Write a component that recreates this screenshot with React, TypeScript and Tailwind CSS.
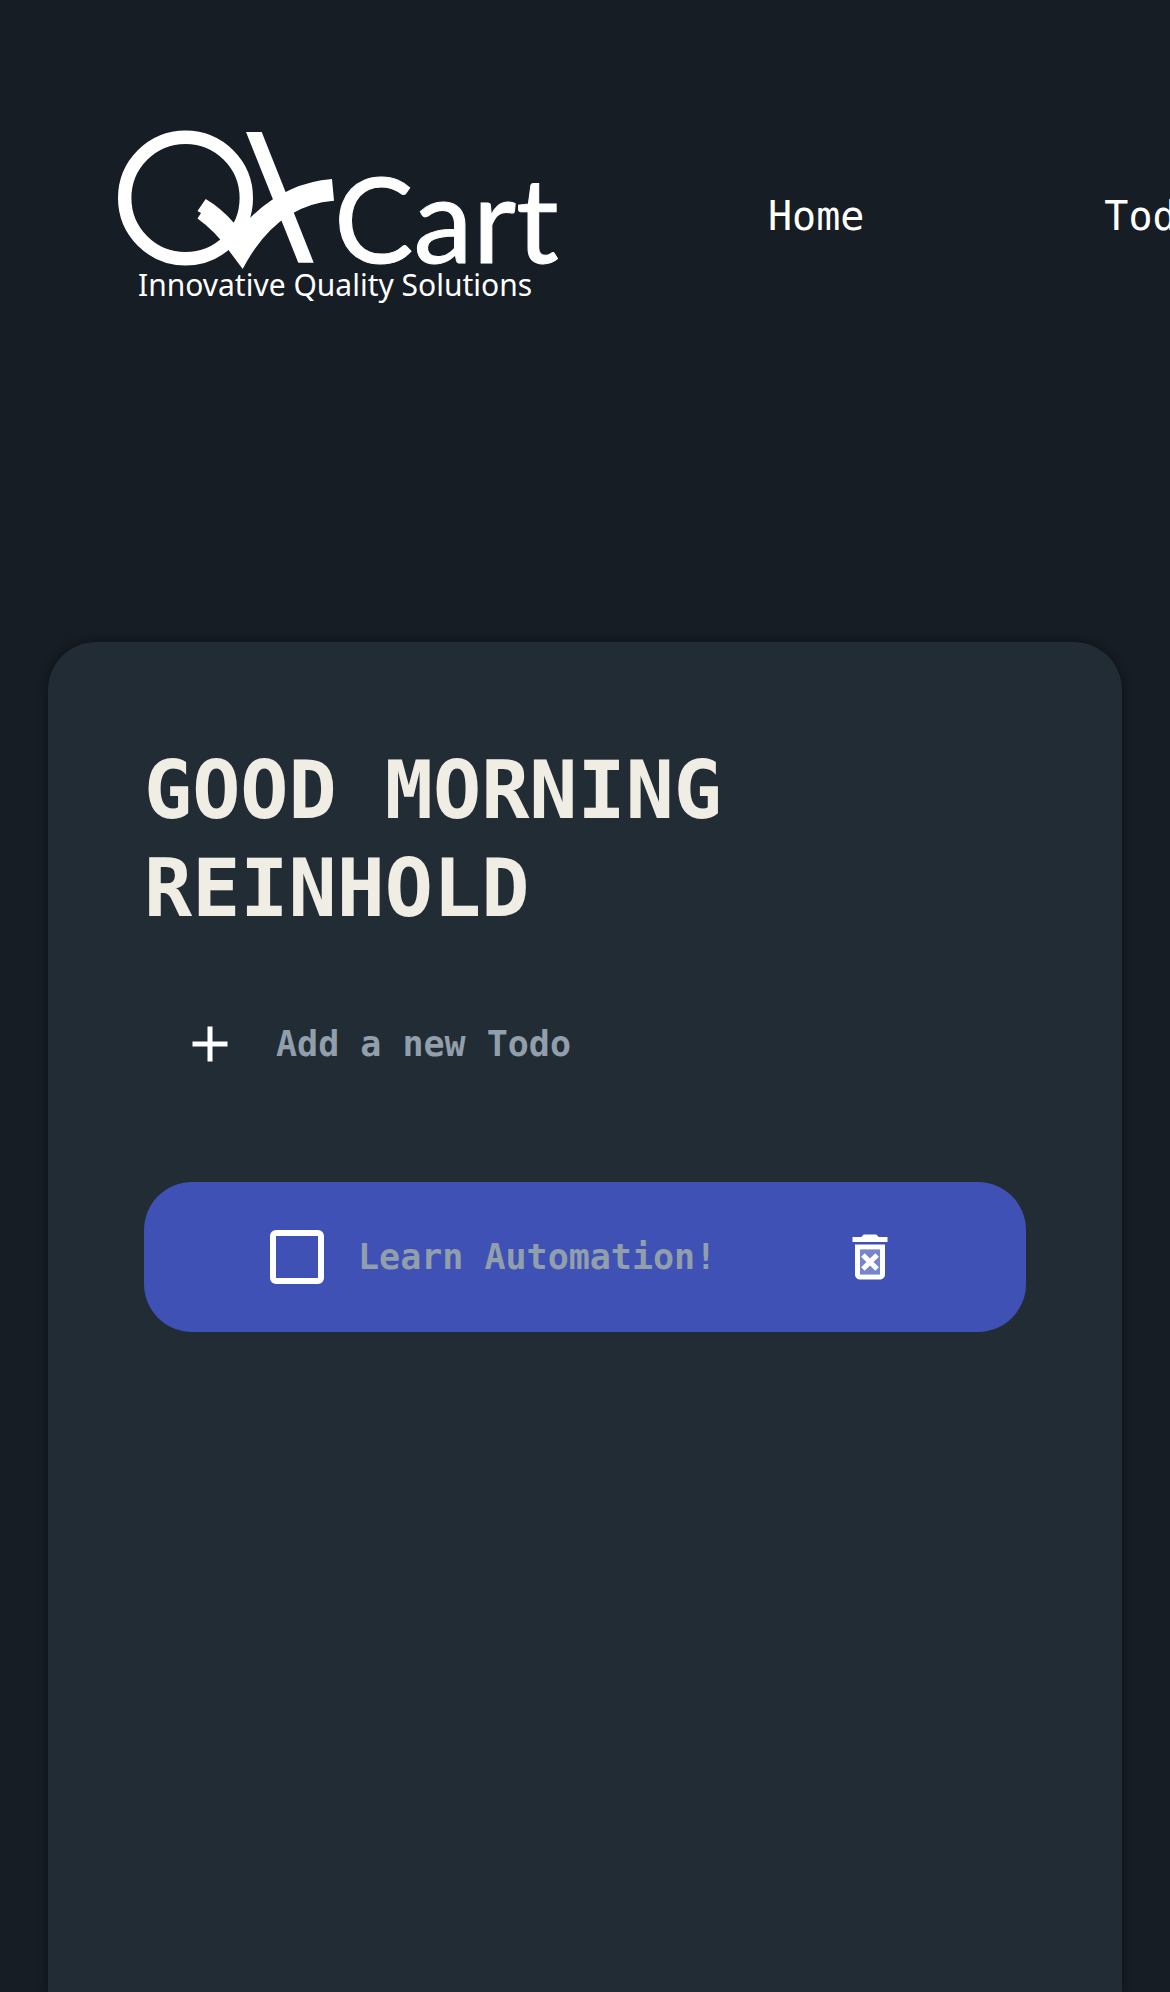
import React from "react";

function Logo() {
  return (
    <svg viewBox="0 0 450 180" className="w-[450px] shrink-0" fill="#fff" role="img" aria-label="QACart">
      <circle cx="67.5" cy="69" r="60.8" fill="none" stroke="#fff" strokeWidth="13.4" />
      <path d="M128 3h15.7l52 130.700h-15.400z" />
      <path d="M87.700 70Q103 79 115.500 93.500L124.700 96.600Q163 54 214 50l2 21.700Q158 76 124.700 140L110.500 121Q97 102 79.500 89.500L83 84l-3.500-2z" />
      <text x="216" y="134" fontFamily="Lato, sans-serif" fontSize="119" stroke="#fff" strokeWidth="1">
        Cart
      </text>
      <text x="20" y="167" fontFamily="'Noto Sans', sans-serif" fontSize="30">
        Innovative Quality Solutions
      </text>
    </svg>
  );
}

function AddIcon() {
  return (
    <svg viewBox="0 0 24 24" className="size-[60px]" fill="currentColor" aria-hidden="true">
      <path d="M19 13h-6v6h-2v-6H5v-2h6V5h2v6h6z" />
    </svg>
  );
}

function DeleteIcon() {
  return (
    <svg viewBox="0 0 24 24" className="size-[60px]" fill="currentColor" aria-hidden="true">
      <path opacity=".3" d="M8 9h8v10H8z" />
      <path d="M14.120 10.470 12 12.590l-2.130-2.120-1.410 1.410L10.590 14l-2.120 2.120 1.410 1.410L12 15.410l2.120 2.120 1.410-1.410L13.410 14l2.120-2.120zM15.500 4l-1-1h-5l-1 1H5v2h14V4zM6 19c0 1.100.9 2 2 2h8c1.100 0 2-.9 2-2V7H6zM8 9h8v10H8z" />
    </svg>
  );
}

const links = ["Home", "Todo"];
const todos = ["Learn Automation!"];

export default function App() {
  return (
    <div className="flex min-h-screen flex-col overflow-x-hidden bg-[#171d24] font-['DejaVu_Sans_Mono',monospace] text-white">
      <header className="flex items-center gap-[200px] pt-[129px] pl-[118px]">
        <Logo />
        <nav className="flex shrink-0 gap-60 pb-1.5 text-[40px] leading-none">
          {links.map((link) => (
            <a key={link} href="#">
              {link}
            </a>
          ))}
        </nav>
      </header>

      <main className="mx-12 mt-[333px] flex-1 rounded-t-[48px] bg-[#222c35] px-24 pt-[100px] shadow-[0_0_8px_rgba(12,12,20,0.8)]">
        <h1 className="text-[80px] leading-[98px] font-bold text-[#f0ede5] uppercase">
          Good Morning
          <br />
          Reinhold
        </h1>

        <div className="mt-[76px] flex items-center gap-9 pl-9">
          <button type="button" aria-label="Add a new Todo">
            <AddIcon />
          </button>
          <h2 className="text-[35px] leading-[60px] font-bold text-[#919eab]">Add a new Todo</h2>
        </div>

        <ul className="mt-[108px] flex flex-col gap-12">
          {todos.map((todo, i) => (
            <li
              key={todo}
              className="flex h-[150px] items-center justify-between rounded-[48px] bg-[#3f51b5] px-[126px]"
            >
              <div className="flex items-center gap-[34px]">
                <input
                  id={`todo-${i}`}
                  type="checkbox"
                  className="size-[54px] appearance-none rounded-[6px] border-[6px] border-white"
                />
                <label htmlFor={`todo-${i}`} className="text-[35px] leading-[60px] font-bold text-[#919eab]">
                  {todo}
                </label>
              </div>
              <button type="button" aria-label="Delete todo">
                <DeleteIcon />
              </button>
            </li>
          ))}
        </ul>
      </main>
    </div>
  );
}
